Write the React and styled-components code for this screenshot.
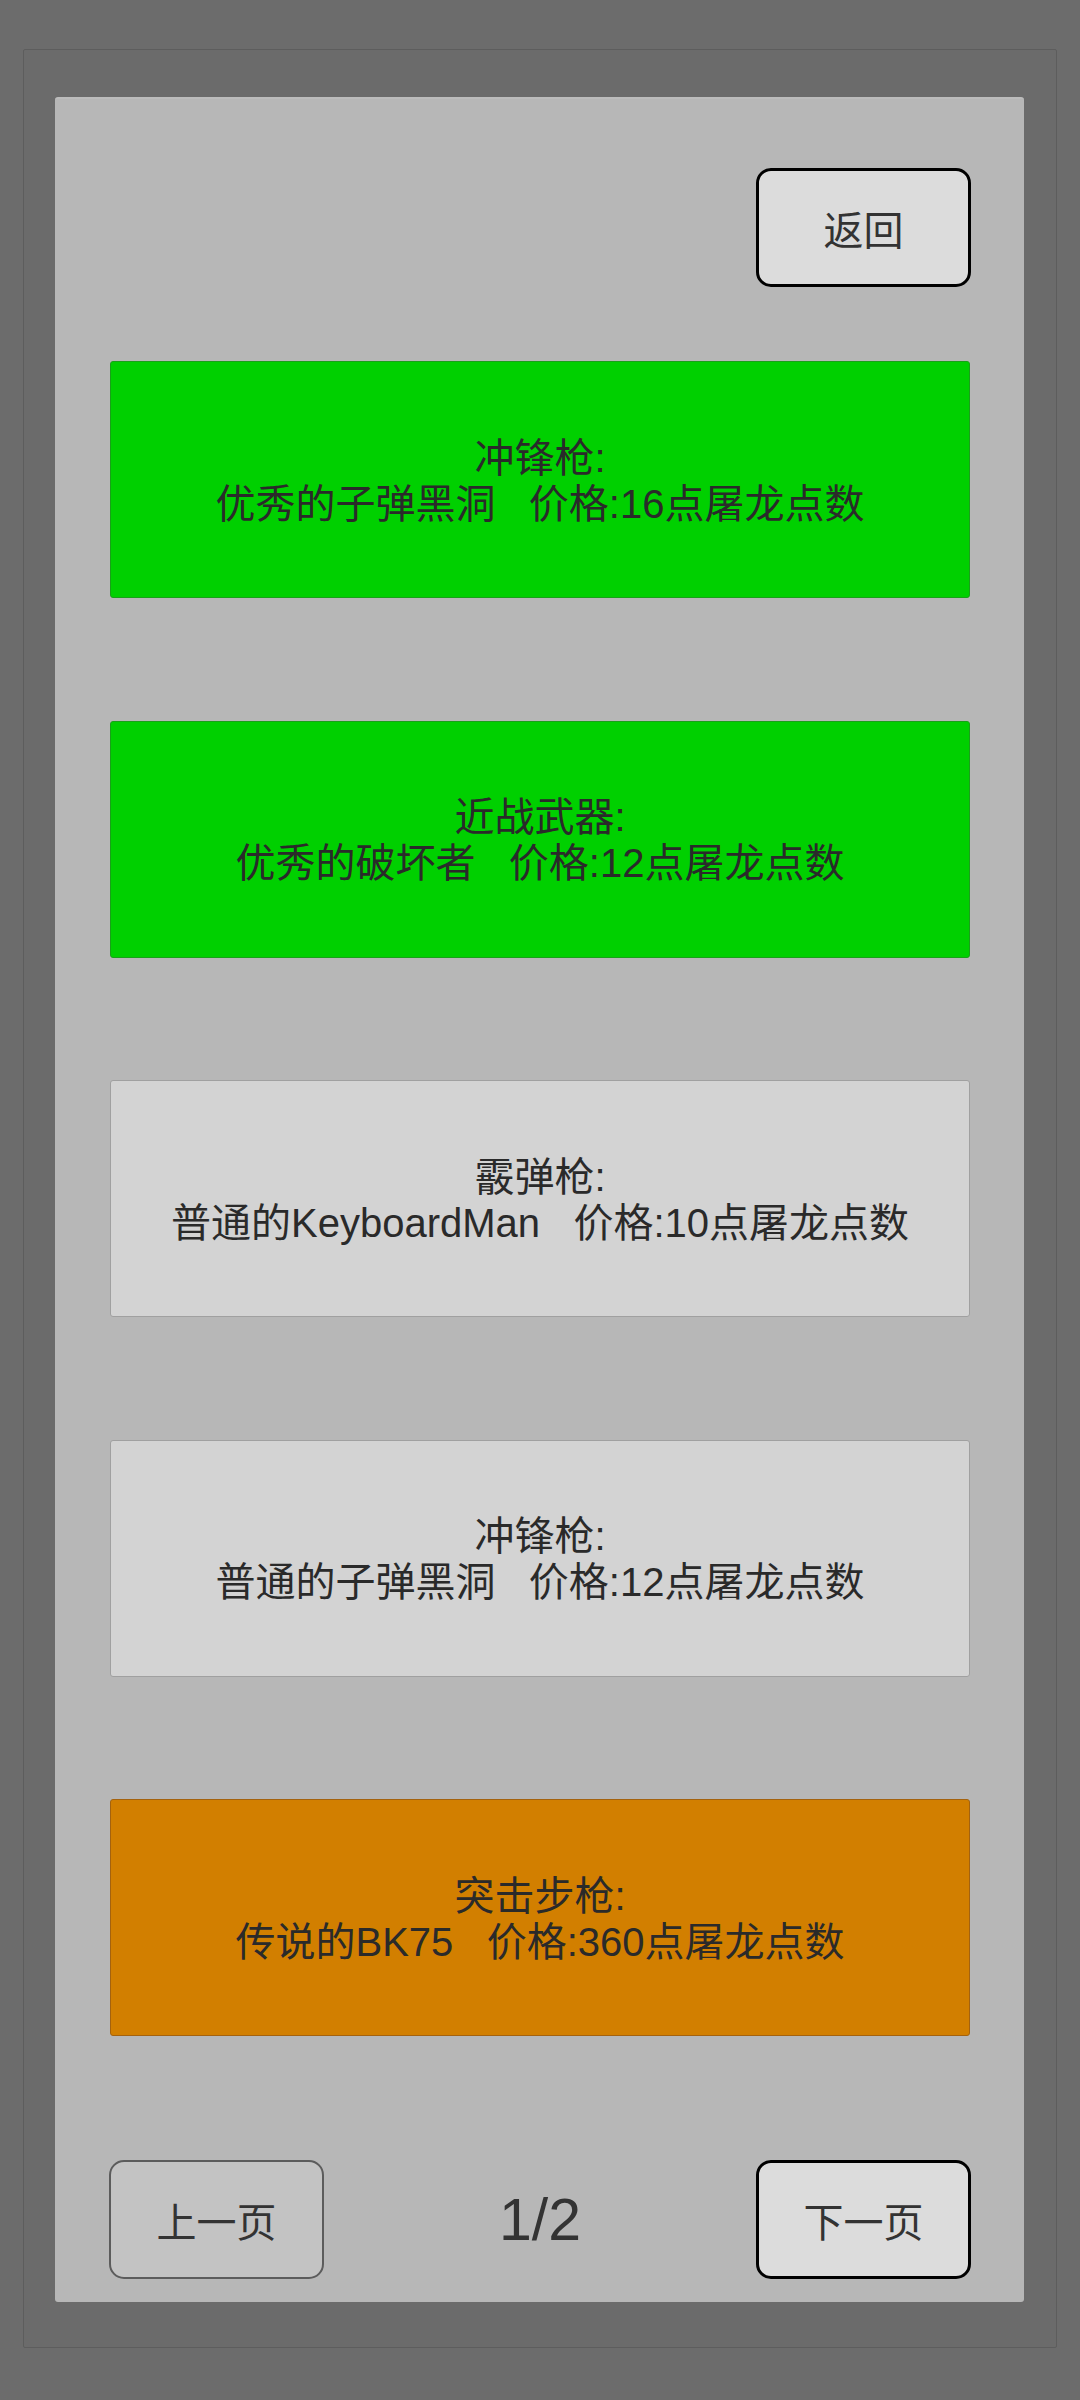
import React from "react";
import styled, { createGlobalStyle } from "styled-components";

const Global = createGlobalStyle`
  html, body { margin: 0; padding: 0; background: #6c6c6c; }
  body { font-family: "Liberation Sans", "Noto Sans CJK SC", sans-serif; }
  * { box-sizing: border-box; }
`;

const Screen = styled.div`
  width: 1080px;
  height: 2400px;
  padding: 49px 23px 0 23px;
  background: #6c6c6c;
`;

const Frame = styled.div`
  height: 2299px;
  border: 1px solid #5d5d5d;
  border-radius: 2px;
  background: #6b6b6b;
  padding: 47px 32px 0 31px;
`;

const Panel = styled.div`
  width: 969px;
  height: 2205px;
  background: #b7b7b7;
  border-top: 2px solid #bcbcbc;
  border-radius: 3px;
  padding: 69px 53px 0 54px;
  display: flex;
  flex-direction: column;
`;

const TopBar = styled.div`
  display: flex;
  justify-content: flex-end;
  margin-bottom: 74px;
`;

const Button = styled.button`
  width: 215px;
  height: 119px;
  border-radius: 15px;
  border: ${(p) => (p.$muted ? "2px solid #5c5c5c" : "3px solid #000")};
  background: ${(p) => (p.$muted ? "#c3c3c3" : "#dcdcdc")};
  color: #333;
  font-family: "Liberation Sans", "Noto Sans CJK SC", sans-serif;
  font-size: 40px;
  padding: 0;
  display: flex;
  align-items: center;
  justify-content: center;
`;

const List = styled.div`
  display: flex;
  flex-direction: column;
  gap: 122.5px;
  padding: 0 1px;
`;

const palette = {
  green: { bg: "#00d000", border: "#19a019" },
  gray: { bg: "#d3d3d3", border: "#a0a0a0" },
  orange: { bg: "#d27f00", border: "#a4620e" },
};

const Card = styled.div`
  height: 237px;
  background: ${(p) => palette[p.$tone].bg};
  border: 1px solid ${(p) => palette[p.$tone].border};
  border-radius: 3px;
  display: flex;
  flex-direction: column;
  align-items: center;
  justify-content: center;
  color: #2a2a2a;
  font-size: 40px;
  line-height: 46px;
  text-align: center;
  white-space: pre;
  padding-top: 2px;
`;

const Footer = styled.div`
  margin-top: 124px;
  display: flex;
  align-items: center;
  justify-content: space-between;
`;

const PageNum = styled.div`
  font-size: 59px;
  color: #333;
  font-family: "Liberation Sans", sans-serif;
`;

const items = [
  { tone: "green", type: "冲锋枪:", desc: "优秀的子弹黑洞   价格:16点屠龙点数" },
  { tone: "green", type: "近战武器:", desc: "优秀的破坏者   价格:12点屠龙点数" },
  { tone: "gray", type: "霰弹枪:", desc: "普通的KeyboardMan   价格:10点屠龙点数" },
  { tone: "gray", type: "冲锋枪:", desc: "普通的子弹黑洞   价格:12点屠龙点数" },
  { tone: "orange", type: "突击步枪:", desc: "传说的BK75   价格:360点屠龙点数" },
];

export default function App() {
  return (
    <>
      <Global />
      <Screen>
        <Frame>
          <Panel>
            <TopBar>
              <Button>返回</Button>
            </TopBar>
            <List>
              {items.map((it, i) => (
                <Card key={i} $tone={it.tone}>
                  <div>{it.type}</div>
                  <div>{it.desc}</div>
                </Card>
              ))}
            </List>
            <Footer>
              <Button $muted>上一页</Button>
              <PageNum>1/2</PageNum>
              <Button>下一页</Button>
            </Footer>
          </Panel>
        </Frame>
      </Screen>
    </>
  );
}
